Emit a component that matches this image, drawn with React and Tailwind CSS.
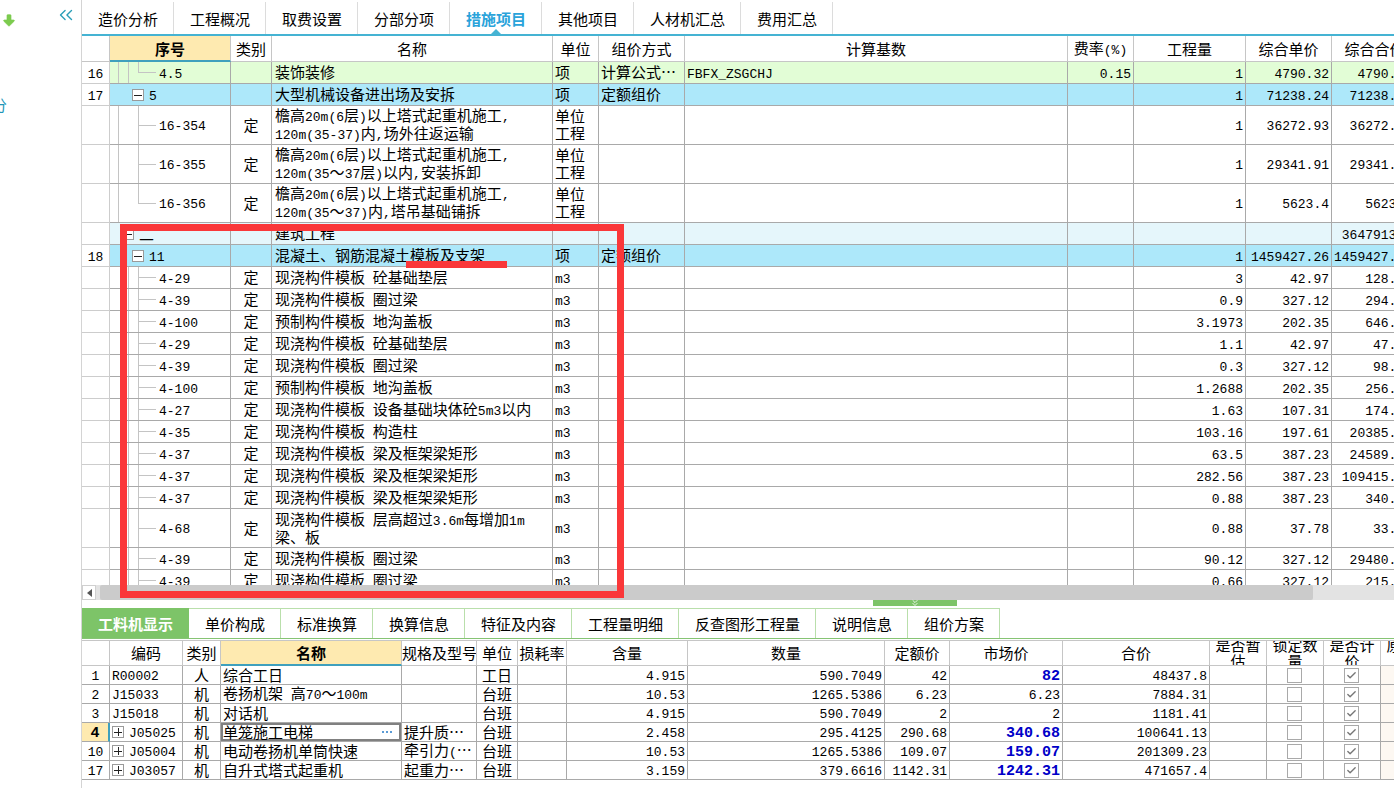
import { Fragment } from 'react';
import { ArrowBigDown, Check, ChevronsDown, ChevronsLeft } from 'lucide-react';

const topTabs = ['造价分析', '工程概况', '取费设置', '分部分项', '措施项目', '其他项目', '人材机汇总', '费用汇总'];

const detailTabs = ['工料机显示', '单价构成', '标准换算', '换算信息', '特征及内容', '工程量明细', '反查图形工程量', '说明信息', '组价方案'];

const FORMWORK = '现浇构件模板';

// tree: which guide lines sit left of the code
const measures = [
  { no: '16', code: '4.5', tree: 'last', guides: [1, 1], tone: 'green', name: ['装饰装修'], unit: ['项'], method: '计算公式…', base: 'FBFX_ZSGCHJ', rate: '0.15', qty: '1', price: '4790.32', total: '4790.32' },
  { no: '17', code: '5', tree: 'open', tone: 'blue', name: ['大型机械设备进出场及安拆'], unit: ['项'], method: '定额组价', qty: '1', price: '71238.24', total: '71238.24' },
  { code: '16-354', tree: 'mid', guides: [1, 0], kind: '定', name: ['檐高20m(6层)以上塔式起重机施工,', '120m(35-37)内,场外往返运输'], unit: ['单位', '工程'], qty: '1', price: '36272.93', total: '36272.93' },
  { code: '16-355', tree: 'mid', guides: [1, 0], kind: '定', name: ['檐高20m(6层)以上塔式起重机施工,', '120m(35～37层)以内,安装拆卸'], unit: ['单位', '工程'], qty: '1', price: '29341.91', total: '29341.91' },
  { code: '16-356', tree: 'last', guides: [1, 0], kind: '定', name: ['檐高20m(6层)以上塔式起重机施工,', '120m(35～37)内,塔吊基础铺拆'], unit: ['单位', '工程'], qty: '1', price: '5623.4', total: '5623.4' },
  { code: '二', tree: 'root', tone: 'pale', name: ['建筑工程'], total: '3647913.5' },
  { no: '18', code: '11', tree: 'open', tone: 'blue', name: ['混凝土、钢筋混凝土模板及支架'], unit: ['项'], method: '定额组价', qty: '1', price: '1459427.26', total: '1459427.26' },
  { code: '4-29', kind: '定', name: [`${FORMWORK} 砼基础垫层`], unit: ['m3'], qty: '3', price: '42.97', total: '128.91' },
  { code: '4-39', kind: '定', name: [`${FORMWORK} 圈过梁`], unit: ['m3'], qty: '0.9', price: '327.12', total: '294.41' },
  { code: '4-100', kind: '定', name: ['预制构件模板 地沟盖板'], unit: ['m3'], qty: '3.1973', price: '202.35', total: '646.97' },
  { code: '4-29', kind: '定', name: [`${FORMWORK} 砼基础垫层`], unit: ['m3'], qty: '1.1', price: '42.97', total: '47.27' },
  { code: '4-39', kind: '定', name: [`${FORMWORK} 圈过梁`], unit: ['m3'], qty: '0.3', price: '327.12', total: '98.14' },
  { code: '4-100', kind: '定', name: ['预制构件模板 地沟盖板'], unit: ['m3'], qty: '1.2688', price: '202.35', total: '256.74' },
  { code: '4-27', kind: '定', name: [`${FORMWORK} 设备基础块体砼5m3以内`], unit: ['m3'], qty: '1.63', price: '107.31', total: '174.92' },
  { code: '4-35', kind: '定', name: [`${FORMWORK} 构造柱`], unit: ['m3'], qty: '103.16', price: '197.61', total: '20385.45' },
  { code: '4-37', kind: '定', name: [`${FORMWORK} 梁及框架梁矩形`], unit: ['m3'], qty: '63.5', price: '387.23', total: '24589.11' },
  { code: '4-37', kind: '定', name: [`${FORMWORK} 梁及框架梁矩形`], unit: ['m3'], qty: '282.56', price: '387.23', total: '109415.71' },
  { code: '4-37', kind: '定', name: [`${FORMWORK} 梁及框架梁矩形`], unit: ['m3'], qty: '0.88', price: '387.23', total: '340.76' },
  { code: '4-68', kind: '定', name: [`${FORMWORK} 层高超过3.6m每增加1m`, '梁、板'], unit: ['m3'], qty: '0.88', price: '37.78', total: '33.25' },
  { code: '4-39', kind: '定', name: [`${FORMWORK} 圈过梁`], unit: ['m3'], qty: '90.12', price: '327.12', total: '29480.05' },
  { code: '4-39', kind: '定', name: [`${FORMWORK} 圈过梁`], unit: ['m3'], qty: '0.66', price: '327.12', total: '215.90' },
];

const resources = [
  { no: '1', code: 'R00002', kind: '人', name: '综合工日', unit: '工日', content: '4.915', qty: '590.7049', quota: '42', market: '82', changed: true, total: '48437.8' },
  { no: '2', code: 'J15033', kind: '机', name: '卷扬机架 高70～100m', unit: '台班', content: '10.53', qty: '1265.5386', quota: '6.23', market: '6.23', total: '7884.31' },
  { no: '3', code: 'J15018', kind: '机', name: '对话机', unit: '台班', content: '4.915', qty: '590.7049', quota: '2', market: '2', total: '1181.41' },
  { no: '4', code: 'J05025', group: true, active: true, kind: '机', name: '单笼施工电梯', spec: '提升质…', unit: '台班', content: '2.458', qty: '295.4125', quota: '290.68', market: '340.68', changed: true, total: '100641.13' },
  { no: '10', code: 'J05004', group: true, kind: '机', name: '电动卷扬机单筒快速', spec: '牵引力(…', unit: '台班', content: '10.53', qty: '1265.5386', quota: '109.07', market: '159.07', changed: true, total: '201309.23' },
  { no: '17', code: 'J03057', group: true, kind: '机', name: '自升式塔式起重机', spec: '起重力…', unit: '台班', content: '3.159', qty: '379.6616', quota: '1142.31', market: '1242.31', changed: true, total: '471657.4' },
];

const tones = {
  green: 'bg-[#e2fdd6]',
  blue: 'bg-[#ade8fa]',
  pale: 'bg-[#e5f6fb]',
};

const mono = "font-['Liberation_Mono',monospace] text-[13px]";
const edge = 'border-r border-b align-middle overflow-hidden whitespace-nowrap';
const bare = `${edge} border-[#a9a9a9]`;
const text = `${bare} pt-0 pb-[2px]`;
const code = `${bare} ${mono} pt-1 pb-0 leading-[14px]`;
const rowNo = `${edge} ${mono} border-[#cdcdcd] pt-1 pb-0 text-center leading-[14px]`;
const num = `${code} text-right`;
const bold = "font-['Liberation_Mono',monospace] text-[15px] font-bold leading-[14px] pt-1";
const headCell = 'border-r border-b border-[#c6c6c6] pb-px align-middle font-normal overflow-hidden whitespace-nowrap';
const sortedHead = 'border-r border-b-2 border-r-[#c6c6c6] border-b-[#3fa0bd] bg-[#feeab0] align-middle font-bold';

// Latin runs are set in the narrower monospace face
const Mixed = ({ text }) =>
  text.split(/([\x20-\x7e]+)/).map((part, i) =>
    i % 2 ? <span key={i} className={`${mono} leading-none whitespace-pre`}>{part}</span> : <Fragment key={i}>{part}</Fragment>
  );

const Toggle = ({ open, label }) => (
  <button
    type="button"
    aria-label={label}
    className="flex size-3 shrink-0 items-center justify-center border border-[#9a9a9a] bg-white"
  >
    <svg viewBox="0 0 10 10" className="size-[10px]" stroke="#222" strokeWidth="1">
      <path d="M1 5.5h8" />
      {!open && <path d="M5.5 1v8" />}
    </svg>
  </button>
);

const CodeCell = ({ row, tall }) => {
  const { tree = 'mid', guides = [0, 1] } = row;
  const height = tall ? 'h-[38px]' : 'h-[21px]';

  if (tree === 'open' || tree === 'root') {
    return (
      <div className={`flex items-center gap-[5px] ${height} ${tree === 'open' ? 'pl-[22px]' : 'pl-3'}`}>
        <Toggle open label={`折叠 ${row.code}`} />
        {tree === 'open' ? <span className={`${mono} pt-1 leading-[14px]`}>{row.code}</span> : <span>{row.code}</span>}
      </div>
    );
  }

  return (
    <div className={`flex pl-2 ${height}`}>
      {guides.map((on, i) => (
        <span key={i} className={on ? 'w-[10px] border-l border-[#c4c4c4]' : 'w-[10px]'} />
      ))}
      <span className="flex w-[18px] flex-col">
        <span className="flex-1 border-b border-l border-[#c4c4c4]" />
        <span className={tree === 'last' ? 'flex-1' : 'flex-1 border-l border-[#c4c4c4]'} />
      </span>
      <span className={`${mono} self-center pt-1 pl-[3px] leading-[14px]`}>{row.code}</span>
    </div>
  );
};

const MeasureRow = ({ row }) => {
  const tall = row.name.length > 1;
  const tone = tones[row.tone] || '';
  return (
    <tr className={tall ? 'h-[39px]' : 'h-[22px]'}>
      <td className={rowNo}>{row.no}</td>
      <td className={`${bare} ${tone}`}><CodeCell row={row} tall={tall} /></td>
      <td className={`${text} ${tone} text-center`}>{row.kind}</td>
      <td className={`${text} ${tone} pl-[3px]`}>
        {row.name.map((line) => <div key={line}><Mixed text={line} /></div>)}
      </td>
      <td className={`${row.unit?.[0] === 'm3' ? code : text} ${tone} pl-[2px]`}>
        {row.unit?.map((line) => <div key={line}>{line}</div>)}
      </td>
      <td className={`${text} ${tone} pl-[2px]`}>{row.method}</td>
      <td className={`${code} ${tone} pl-[2px]`}>{row.base}</td>
      <td className={`${num} ${tone} pr-[2px]`}>{row.rate}</td>
      <td className={`${num} ${tone} pr-[2px]`}>{row.qty}</td>
      <td className={`${num} ${tone} pr-[2px]`}>{row.price}</td>
      <td className={`${num} ${tone} pr-[5px]`}>{row.total}</td>
    </tr>
  );
};

const MeasureTable = () => (
  <table className="w-[calc(100%+24px)] table-fixed border-separate border-spacing-0">
    <colgroup>
      <col className="w-[28px]" />
      <col className="w-[121px]" />
      <col className="w-[41px]" />
      <col className="w-[281px]" />
      <col className="w-[46px]" />
      <col className="w-[86px]" />
      <col />
      <col className="w-[66px]" />
      <col className="w-[112px]" />
      <col className="w-[86px]" />
      <col className="w-[86px]" />
    </colgroup>
    <thead>
      <tr className="h-[26px]">
        <th className={headCell} />
        <th className={sortedHead}>序号</th>
        <th className={headCell}>类别</th>
        <th className={headCell}>名称</th>
        <th className={headCell}>单位</th>
        <th className={headCell}>组价方式</th>
        <th className={headCell}>计算基数</th>
        <th className={headCell}><Mixed text="费率(%)" /></th>
        <th className={headCell}>工程量</th>
        <th className={headCell}>综合单价</th>
        <th className={headCell}>综合合价</th>
      </tr>
    </thead>
    <tbody>
      {measures.map((row, i) => <MeasureRow key={i} row={row} />)}
    </tbody>
  </table>
);

const CheckCell = ({ checked, label }) => (
  <div className="grid h-[18px] place-content-center pr-[2px]">
    <input
      type="checkbox"
      defaultChecked={checked}
      aria-label={label}
      className="[grid-area:1/1] size-[15px] appearance-none border border-[#a9a9a9] bg-white"
    />
    {checked && <Check className="pointer-events-none [grid-area:1/1] size-[11px] place-self-center text-[#777]" strokeWidth={3} />}
  </div>
);

const WrapHead = ({ children }) => (
  <th className="border-r border-b border-[#c6c6c6] font-normal">
    <div className="flex h-[24px] items-center justify-center overflow-hidden px-[5px] leading-4">
      {children}
    </div>
  </th>
);

const ResourceTable = () => (
  <table className="w-[calc(100%+44px)] table-fixed border-separate border-spacing-0 leading-4">
    <colgroup>
      <col className="w-[28px]" />
      <col className="w-[73px]" />
      <col className="w-[38px]" />
      <col className="w-[181px]" />
      <col className="w-[75px]" />
      <col className="w-[41px]" />
      <col className="w-[49px]" />
      <col className="w-[121px]" />
      <col />
      <col className="w-[65px]" />
      <col className="w-[113px]" />
      <col className="w-[147px]" />
      <col className="w-[57px]" />
      <col className="w-[57px]" />
      <col className="w-[57px]" />
      <col className="w-[57px]" />
    </colgroup>
    <thead>
      <tr className="h-[25px]">
        <th className={headCell} />
        <th className={headCell}>编码</th>
        <th className={headCell}>类别</th>
        <th className={sortedHead}>名称</th>
        <th className={headCell}>规格及型号</th>
        <th className={headCell}>单位</th>
        <th className={headCell}>损耗率</th>
        <th className={headCell}>含量</th>
        <th className={headCell}>数量</th>
        <th className={headCell}>定额价</th>
        <th className={headCell}>市场价</th>
        <th className={headCell}>合价</th>
        <WrapHead>是否暂估</WrapHead>
        <WrapHead>锁定数量</WrapHead>
        <WrapHead>是否计价</WrapHead>
        <WrapHead>原始含量</WrapHead>
      </tr>
    </thead>
    <tbody>
      {resources.map((row) => (
        <tr key={row.no} className="h-[19px]">
          {row.active ? (
            <td className={`border-r-2 border-b border-r-[#3fa0bd] border-b-[#a9a9a9] bg-[#feeab0] text-center ${bold}`}>{row.no}</td>
          ) : (
            <td className={`${code} text-center`}>{row.no}</td>
          )}
          <td className={bare}>
            <div className="flex h-[18px] items-center gap-[5px] pl-[2px]">
              {row.group && <Toggle label={`展开 ${row.code}`} />}
              <span className={`${mono} pt-1 leading-[14px]`}>{row.code}</span>
            </div>
          </td>
          <td className={`${bare} pb-px text-center`}>{row.kind}</td>
          <td className={row.active ? `${bare} inset-ring-2 inset-ring-[#808080]` : bare}>
            <div className="flex h-[18px] items-center justify-between pr-[9px] pb-px pl-[2px]">
              <span><Mixed text={row.name} /></span>
              {row.active && (
                <button type="button" aria-label="选择" className="flex gap-[2px]">
                  <i className="size-[2px] bg-[#5b9bd5]" />
                  <i className="size-[2px] bg-[#5b9bd5]" />
                  <i className="size-[2px] bg-[#5b9bd5]" />
                </button>
              )}
            </div>
          </td>
          <td className={bare}>
            <div className="flex h-[18px] items-center pb-px pl-[2px]">
              <span>{row.spec && <Mixed text={row.spec} />}</span>
            </div>
          </td>
          <td className={`${bare} pb-px text-center`}>{row.unit}</td>
          <td className={bare} />
          <td className={`${num} pr-[2px]`}>{row.content}</td>
          <td className={`${num} pr-[2px]`}>{row.qty}</td>
          <td className={`${num} pr-[2px]`}>{row.quota}</td>
          {row.changed ? (
            <td className={`border-r border-b border-[#a9a9a9] pr-[2px] text-right text-[#0000c8] ${bold}`}>{row.market}</td>
          ) : (
            <td className={`${num} pr-[2px]`}>{row.market}</td>
          )}
          <td className={`${num} pr-[2px]`}>{row.total}</td>
          <td className={bare} />
          <td className={bare}><CheckCell label={`锁定数量 ${row.code}`} /></td>
          <td className={bare}><CheckCell checked label={`是否计价 ${row.code}`} /></td>
          <td className={`${bare} bg-[#fdf8f2]`} />
        </tr>
      ))}
    </tbody>
  </table>
);

const Sidebar = () => (
  <aside className="w-[81px] shrink-0">
    <div className="flex items-start justify-between pt-[4px] pr-[4px] pl-[1px]">
      <ArrowBigDown className="mt-[8px] size-4 fill-[#7ccb4e] text-[#7ccb4e]" strokeWidth={1} />
      <button type="button" aria-label="收起">
        <ChevronsLeft className="size-[22px] text-[#2a9fb8]" strokeWidth={1.5} />
      </button>
    </div>
    <a href="#" className="mt-[68px] flex w-[7px] justify-end overflow-hidden text-[#2196b8]">分</a>
  </aside>
);

const App = () => (
  <div className="flex min-h-screen overflow-hidden bg-white font-['Noto_Sans_CJK_SC',sans-serif] text-[15px] leading-[17px] text-black">
    <Sidebar />
    <main className="relative min-w-0 flex-1 overflow-hidden border-l border-[#d4d4d4]">
      <nav className="flex h-[36px] border-b-2 border-[#45b3d3] pt-[2px]">
        {topTabs.map((tab) => (
          <button
            key={tab}
            type="button"
            className={
              tab === '措施项目'
                ? 'relative border-r border-[#dcdcdc] pr-[15px] pl-4 font-bold text-[#2aa3da]'
                : 'border-r border-[#dcdcdc] pr-[15px] pl-4'
            }
          >
            {tab}
            {tab === '措施项目' && (
              <svg viewBox="0 0 10 5" className="absolute bottom-0 left-[41px] h-[5px] w-[10px] fill-[#45b3d3]">
                <path d="M0 5L5 0l5 5z" />
              </svg>
            )}
          </button>
        ))}
      </nav>

      <div className="h-[549px] overflow-hidden">
        <MeasureTable />
      </div>
      <div className="flex h-[15px] bg-[#e3e3e3]">
        <button type="button" aria-label="向左滚动" className="mr-[4px] flex w-[14px] items-center justify-center border border-[#d0d0d0] bg-white">
          <svg viewBox="0 0 5 8" className="h-2 w-[5px] fill-[#555]"><path d="M5 0v8L0 4z" /></svg>
        </button>
        <div className="mr-[81px] flex-1 rounded-[2px] bg-[#cbcbcb]" />
      </div>

      {/* review marks over the grid */}
      <div className="pointer-events-none absolute top-[224px] left-[38px] h-[374px] w-[504px] border-[7px] border-[#fa3739]" />
      <div className="pointer-events-none absolute top-[261px] left-[324px] h-[7px] w-[101px] bg-[#fa3739]" />

      <div className="flex h-[8px] justify-center pl-[354px]">
        <button type="button" aria-label="收起明细" className="flex h-[6px] w-[84px] items-center justify-center bg-[#7dc468] text-white">
          <ChevronsDown className="size-[10px]" />
        </button>
      </div>

      <nav className="flex h-[31px] border-b border-[#86c474]">
        {detailTabs.map((tab, i) => (
          <button
            key={tab}
            type="button"
            className={
              i === 0
                ? 'w-[107px] bg-[#7dc468] font-bold text-white'
                : 'border-t border-r border-[#b9dfab] pr-[15px] pl-4'
            }
          >
            {tab}
          </button>
        ))}
      </nav>
      <div className="mt-px border-t border-[#c6c6c6]">
        <ResourceTable />
      </div>
    </main>
  </div>
);

export default App;
